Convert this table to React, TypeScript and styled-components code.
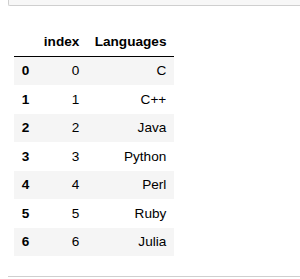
import React from 'react';
import styled, { createGlobalStyle } from 'styled-components';

const GlobalStyle = createGlobalStyle`
  html, body {
    margin: 0;
    padding: 0;
    background: #ffffff;
    overflow: hidden;
  }
`;

const Page = styled.div`
  width: 300px;
  height: 279px;
  display: flex;
  flex-direction: column;
  font-family: 'Liberation Sans', Arial, sans-serif;
  color: #000000;
`;

const InputCell = styled.div`
  margin-left: 8px;
  height: 5px;
  background: #f7f7f7;
  border: 1px solid #cfcfcf;
  border-top: none;
  border-right: none;
  border-bottom-left-radius: 2px;
`;

const OutputArea = styled.div`
  padding: 21px 0 0 14px;
`;

const Table = styled.table`
  border-collapse: collapse;
  border-spacing: 0;
  table-layout: fixed;
  width: 160px;
  font-size: 13.6px;
`;

const HeadCell = styled.th<{ $w: number }>`
  box-sizing: border-box;
  width: ${({ $w }) => $w}px;
  padding: 6.5px 7.7px 6px;
  line-height: 16px;
  text-align: right;
  font-weight: 700;
  border-bottom: 1px solid #000000;
  white-space: nowrap;
`;

const Row = styled.tr<{ $striped: boolean }>`
  background: ${({ $striped }) => ($striped ? '#f5f5f5' : 'transparent')};
`;

const RowLabel = styled.th`
  padding: 6.5px 7.7px 6px;
  line-height: 16px;
  text-align: right;
  font-weight: 700;
`;

const Cell = styled.td`
  padding: 6.5px 7.7px 6px;
  line-height: 16px;
  text-align: right;
  font-weight: 400;
`;

const Divider = styled.div`
  margin: 20px 0 0 8px;
  border-top: 1px solid #cfcfcf;
`;

const languages = ['C', 'C++', 'Java', 'Python', 'Perl', 'Ruby', 'Julia'];

export default function App() {
  return (
    <Page>
      <GlobalStyle />
      <InputCell />
      <OutputArea>
        <Table>
          <thead>
            <tr>
              <HeadCell $w={21.5}></HeadCell>
              <HeadCell $w={51.5}>index</HeadCell>
              <HeadCell $w={87}>Languages</HeadCell>
            </tr>
          </thead>
          <tbody>
            {languages.map((lang, i) => (
              <Row key={lang} $striped={i % 2 === 0}>
                <RowLabel>{i}</RowLabel>
                <Cell>{i}</Cell>
                <Cell>{lang}</Cell>
              </Row>
            ))}
          </tbody>
        </Table>
      </OutputArea>
      <Divider />
    </Page>
  );
}
